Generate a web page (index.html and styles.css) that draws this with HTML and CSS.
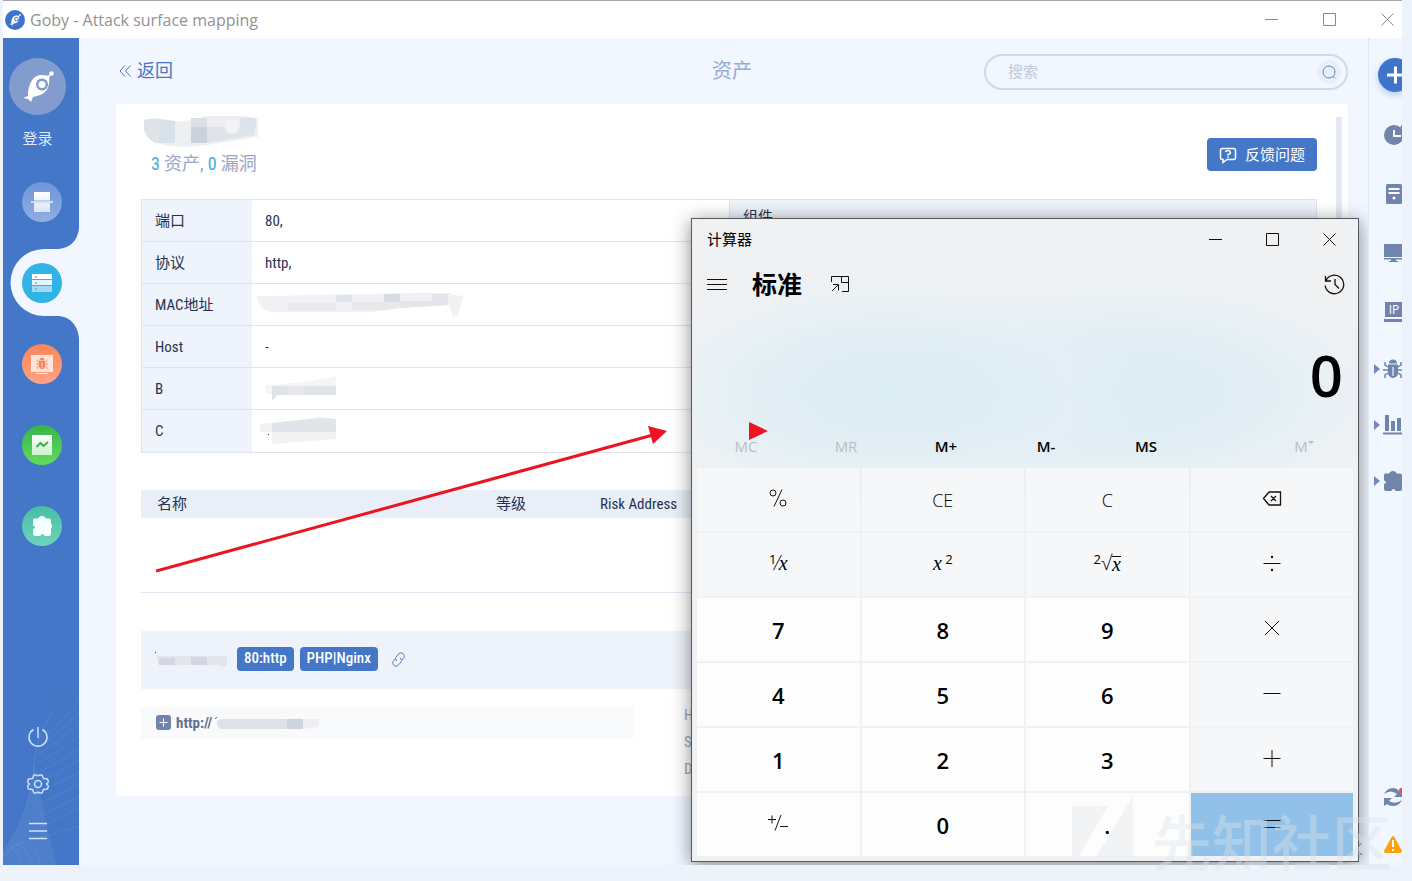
FILE: index.html
```html
<!DOCTYPE html>
<html lang="zh-CN">
<head>
<meta charset="utf-8">
<meta name="viewport" content="width=device-width, initial-scale=1">
<title>Goby - Attack surface mapping</title>
<link rel="stylesheet" href="styles.css">
</head>
<body>
<svg class="defs" aria-hidden="true">
  <defs>
    <linearGradient id="fade" x1="0" y1="0" x2="0" y2="1"><stop offset="0" stop-color="#fff"/><stop offset="1" stop-color="#fff" stop-opacity=".7"/></linearGradient>
    <symbol id="rocket" viewBox="0 0 32 32">
      <path fill="currentColor" fill-rule="evenodd" d="M1 27l5-2C6 17 8 10 13 6c4-3 9-2 14-1 1 6 0 12-4 16-3 3-8 4-12 5l-2 5-3-3zM20 7.500a6 6 0 1 0 .01 0z"/>
      <circle cx="20" cy="13.500" r="3.500" fill="currentColor"/>
      <path d="M24 9l5-6" stroke="currentColor" stroke-width="1.500"/><circle cx="29.500" cy="2.500" r="2.300" fill="currentColor"/>
    </symbol>
    <symbol id="puzzle" viewBox="0 0 20 20">
      <path fill="currentColor" d="M2 2.500h4.500C6.500 1 8 0 10 0s3.500 1 3.500 2.500H17q2 0 2 2V8c1.500.5 1.500 4 0 4.500V18q0 2-2 2h-4.500c0-2.500-4-2.500-4 0H3q-2 0-2-2v-5c2.500 0 2.500-3.500 0-3.500V4.500q0-2 1-2z"/>
    </symbol>
    <symbol id="bug" viewBox="0 0 20 20">
      <path fill="currentColor" d="M6 4.500a4 4 0 0 1 8 0zM5 5.500h10V14a5 5 0 0 1-10 0z"/>
      <path d="M5 8L2 6V3M15 8l3-2V3M5 11H0M15 11h5M5 14l-3 2v3M15 14l3 2v3" fill="none" stroke="currentColor" stroke-width="1.500"/>
      <path d="M10 8v9" stroke="#eef3fd" stroke-width="1.200"/>
    </symbol>
  </defs>
</svg>

<div class="app">
  <header class="titlebar">
    <svg class="titlebar-logo" viewBox="0 0 20 20"><circle cx="10" cy="10" r="10" fill="#3d73cf"/><svg x="4" y="4" width="12" height="12" color="#fff"><use href="#rocket"/></svg></svg>
    <h1>Goby - Attack surface mapping</h1>
    <div class="window-controls">
      <button aria-label="Minimize"><svg viewBox="0 0 13 13"><path d="M0 6.500h13"/></svg></button>
      <button aria-label="Maximize"><svg viewBox="0 0 13 13"><path d="M.5.5h12v12H.5z"/></svg></button>
      <button aria-label="Close"><svg viewBox="0 0 13 13"><path d="M.5.5l12 12M12.500.5l-12 12"/></svg></button>
    </div>
  </header>

  <div class="workspace">
    <nav class="sidebar">
      <svg class="sidebar-waves" viewBox="0 0 76 185" preserveAspectRatio="none">
        <path d="M0 172Q28 135 31 80Q42 145 54 185H0z" fill="#fff" stroke="none" opacity=".06"/>
        <path d="M0 172Q28 135 31 80Q38 30 76 10"/>
        <path d="M34 60Q56 48 76 20M33 68Q56 54 76 32M33 76Q56 62 76 44M33 84Q56 72 76 56M34 94Q56 82 76 68M34 102Q56 94 76 80M34 112Q56 104 76 92M34 124Q56 116 76 104M34 136Q56 128 76 116M34 148Q56 138 76 128M36 158Q56 152 76 146M0 176Q14 158 18 185M4 172Q22 154 28 185M8 168Q30 150 38 185"/>
      </svg>
      <svg class="sidebar-notch" viewBox="0 0 76 122"><path d="M76 0C76 18 67 27 53 27H40.500a33.500 33.500 0 0 0 0 67H53C67 94 76 104 76 122z" fill="#f1f6ff"/></svg>
      <button class="profile"><span class="avatar"><svg width="32" height="32"><use href="#rocket"/></svg></span>登录</button>
      <div class="nav-list">
        <button class="nav-item scan" aria-label="扫描"><svg viewBox="0 0 24 24"><path fill="url(#fade)" d="M4 2h16v8.500H4zM4 13h16v9H4z"/><path d="M1 12h22" stroke="#e8f0ff" stroke-width="1.500"/></svg></button>
        <button class="nav-item asset" aria-label="资产"><svg viewBox="0 0 24 24"><path fill="#fff" d="M2 3h20v5H2z"/><path fill="#e2f4fc" d="M2 9h20v5H2z"/><path fill="#a3daf3" d="M2 15h20v6H2z"/><path d="M5 6h1.500M5 12h1.500M5 18h1.500" stroke="#4aa3cf" stroke-width="1.500"/></svg></button>
        <button class="nav-item vuln" aria-label="漏洞"><svg viewBox="0 0 24 24"><path fill="#ffe4da" d="M1 3h22v17H1zM6 21h12v1H6z"/><svg x="6" y="5" width="12" height="13" color="#f5855a"><use href="#bug"/></svg></svg></button>
        <button class="nav-item report" aria-label="报告"><svg viewBox="0 0 24 24"><path fill="url(#fade)" d="M2 2h20v20H2z"/><path d="M6.500 14l4-4 3 3 4.500-4" fill="none" stroke="#3fae4b" stroke-width="2"/></svg></button>
        <button class="nav-item plugin" aria-label="扩展"><svg viewBox="-2 -2 24 24" color="#f3fffb"><use href="#puzzle" width="20" height="20"/></svg></button>
      </div>
      <div class="nav-tools">
        <button aria-label="电源"><svg viewBox="0 0 22 22"><path d="M6.500 3.500a9 9 0 1 0 9 0M11 1v11"/></svg></button>
        <button aria-label="设置"><svg viewBox="0 0 22 22"><path d="M7 2h2.500q1.500 1.500 3 0H15l1.500 3.500 4 .5 1 3-2 2 2 2-1 3-4 .5L15 20h-2.500q-1.500-1.500-3 0H7l-1.500-3.500-4-.5-1-3 2-2-2-2 1-3 4-.5z" stroke-linejoin="round"/><circle cx="11" cy="11" r="3.500"/></svg></button>
        <button aria-label="菜单"><svg viewBox="0 0 22 22"><path d="M2 3.500h18M2 11h18M2 18.500h18"/></svg></button>
      </div>
    </nav>

    <main class="main">
      <div class="topbar">
        <a class="back" href="#"><svg viewBox="0 0 12 12"><path d="M6 .5L1 6l5 5.500M11.500.5l-5 5.500 5 5.500"/></svg>返回</a>
        <h2>资产</h2>
        <form class="search">
          <input type="text" placeholder="搜索" aria-label="搜索">
          <button type="button" aria-label="搜索"><svg viewBox="0 0 14 14"><circle cx="7" cy="7" r="6"/><path d="M10.500 11l2.500 2.500"/></svg></button>
        </form>
      </div>

      <section class="card">
        <div class="summary">
          <div>
            <svg class="mosaic" width="115" height="32" viewBox="0 0 115 32"><path fill="#edeff3" d="M1 5Q10 0 24 4T60 1t55 2v18L70 28Q35 34 14 27Q1 20 1 5z"/><path fill="#dfe2e8" d="M1 4Q8 2 16 3v24h-4Q3 22 1 14z"/><path fill="#d8e0e9" d="M16 3l16 2v22H16z"/><path fill="#dcdfe6" d="M48 2h16v10H48z"/><path fill="#cdd1dc" d="M48 11h16v16H48z"/><path fill="#dfe4eb" d="M64 11h48v8l-48 8z"/><path fill="#dde1ea" d="M97 2h16v10H97z"/><circle cx="89" cy="11" r="7" fill="#f1f3f5"/></svg>
            <p class="counts"><b>3</b> 资产, <b>0</b> 漏洞</p>
          </div>
          <button class="feedback"><svg viewBox="0 0 18 18"><path d="M3.500 2.500h11q2 0 2 2v7q0 2-2 2H8l-4 3v-3h-.5q-2 0-2-2v-7q0-2 2-2z"/><path d="M6.500 6Q7 4.500 9 4.500T11.500 6.500Q11.500 8 9 8.500v1.200M9 10.500v1.500"/></svg>反馈问题</button>
        </div>

        <div class="details">
          <table class="facts">
            <tr><th scope="row">端口</th><td>80,</td></tr>
            <tr><th scope="row">协议</th><td>http,</td></tr>
            <tr><th scope="row">MAC地址</th><td class="masked"><svg class="mosaic" width="208" height="25" viewBox="0 0 208 25"><path fill="#f0f1f4" d="M0 4L15 4 100 2l60-1h33l3 2 10 1-5 19-5 2-4-12-50 3-27 4H15Q2 18 0 4z"/><path fill="#e8e9ed" d="M31 11h48v8H31zM95 10h48v6l-16 2H95z"/><path fill="#dfe4ea" d="M79 3h16v7H79z"/><path fill="#d9dce4" d="M127 2h16v8h-16z"/><path fill="#e4e5ea" d="M143 9h48v4l-48 3zM175 2h16v8h-16z"/></svg></td></tr>
            <tr><th scope="row">Host</th><td>-</td></tr>
            <tr><th scope="row">B</th><td class="masked"><svg class="mosaic" width="80" height="26" viewBox="0 0 80 26"><path fill="#f5f5f7" d="M9 9L50 6 79 0v18H9z"/><path fill="#dfe2e7" d="M15 10h64v9H20l-5 6z"/><path fill="#e7e8eb" d="M31 10h16v9H31z"/></svg></td></tr>
            <tr><th scope="row">C</th><td class="masked"><svg class="mosaic" width="80" height="28" viewBox="0 0 80 28"><path fill="#f1f2f4" d="M3 7l12-1L64 0l15 2v20l-64 5V15H3z"/><path fill="#e1e4e8" d="M15 6l49-5 15 1v13H15z"/><path fill="#334" d="M11 17h1v1h-1z"/></svg></td></tr>
          </table>
          <div class="components">组件</div>
        </div>

        <table class="risks">
          <thead><tr><th scope="col">名称</th><th scope="col">等级</th><th scope="col">Risk Address</th></tr></thead>
          <tbody><tr><td colspan="3"></td></tr></tbody>
        </table>

        <div class="service">
          <svg class="mosaic" width="73" height="16" viewBox="0 0 73 16"><path fill="#e3e5ec" d="M2 4h70v9l-3 2-5-2H4z"/><path fill="#d3d7e1" d="M4 6h16v7H4zM36 5h16v8H36z"/><path fill="#334" d="M0 0h1v1H0z"/></svg>
          <span class="chip">80:http</span><span class="chip">PHP|Nginx</span>
          <a href="#" aria-label="链接"><svg viewBox="0 0 15 15"><path d="M6 9L5 8q-1-1.500 0-3l3-3.500q2-1.500 4 0t1 4L11 8M9 6l1 1q1 1.500 0 3l-3 3.500q-2 1.500-4 0t-1-4L4 7"/></svg></a>
        </div>

        <div class="responses">
          <div class="url"><svg viewBox="0 0 15 15"><rect width="15" height="15" rx="3" fill="#7184ab"/><path d="M3.500 7.500h8M7.500 3.500v8" stroke="#fff"/></svg><b>http://</b><svg class="mosaic url-mask" width="106" height="14" viewBox="0 0 106 14"><path fill="#dfe1e9" d="M3 5Q6 3 10 3h79v10H8Q2 12 3 5z"/><path fill="#cdd2df" d="M73 3h16v10H73z"/><path fill="#eeeff4" d="M89 3h16v8l-16 2z"/><path d="M1 3l2-2" stroke="#61718f"/></svg></div>
          <ul><li>H</li><li>S</li><li>D</li></ul>
        </div>
        <span class="scroll-thumb"></span>
      </section>
      <svg class="collapse" viewBox="0 0 12 16"><path d="M1 1v14M10 2L4 8l6 6"/></svg>
    </main>

    <aside class="rail">
      <button class="add" aria-label="新增"><svg viewBox="0 0 34 34"><circle cx="17" cy="17" r="17" fill="#3e74ca"/><path d="M9 17h17M17.500 8.500v17" stroke="#fff" stroke-width="3"/></svg></button>
      <div class="rail-group">
        <button aria-label="历史"><svg viewBox="0 0 20 20"><circle cx="11" cy="10" r="10" fill="currentColor"/><path d="M11 5v6h7" fill="none" stroke="#fff" stroke-width="2"/><path fill="#f34b5b" d="M17 3l2-4h2v5z"/></svg></button>
        <button aria-label="服务器"><svg viewBox="0 0 20 20"><rect x="3" width="16" height="20" rx="1.500" fill="currentColor"/><path d="M5.500 5h11M5.500 9h11" stroke="#fff" stroke-width="2"/><circle cx="11" cy="14" r="1.500" fill="#fff"/></svg></button>
        <button aria-label="设备"><svg viewBox="0 0 20 20"><path fill="currentColor" d="M1 1h18v13H1zM1 15h18v1.500h-6V18h2v1H6v-1h2v-1.500H1z"/></svg></button>
        <button aria-label="IP"><svg viewBox="0 0 20 20"><path fill="currentColor" d="M2 0h17v15H2zM1 17h18v3H1z"/><text class="ip" x="11" y="12">IP</text></svg></button>
      </div>
      <div class="rail-group nested">
        <button aria-label="漏洞"><svg viewBox="0 0 20 20"><use href="#bug"/></svg></button>
        <button aria-label="统计"><svg viewBox="0 0 20 20"><path fill="currentColor" d="M2 0h4v16H2zM8 6h4v10H8zM14 3h4v13h-4zM0 17.500h20v2H0z"/></svg></button>
        <button aria-label="扩展"><svg viewBox="0 0 20 20"><use href="#puzzle"/></svg></button>
      </div>
      <div class="rail-group end">
        <button aria-label="更新"><svg viewBox="0 0 20 20"><path fill="currentColor" d="M1 7Q4 1 10 1q4 0 6 3l3-2v8h-8l3-3q-6-5-13 0zM19 13q-3 6-9 6-4 0-6-2l-3 2v-8h8l-3 3q6 4 13-1z"/><path fill="#f34b5b" d="M16 2l4-2v8l-3-2z"/></svg></button>
        <button aria-label="警告"><svg viewBox="0 0 20 20"><path fill="#ff9f0a" d="M10 1q1 0 2 2l7 13q0 2-2 2H3q-2 0-2-2L8 3q1-2 2-2z"/><path d="M10 5v7M10 14v2" stroke="#fff" stroke-width="2"/></svg></button>
      </div>
    </aside>
  </div>

  <section class="calc" aria-label="计算器">
    <header class="calc-title"><span>计算器</span>
      <div class="window-controls">
        <button aria-label="最小化"><svg viewBox="0 0 13 13"><path d="M0 6.500h13"/></svg></button>
        <button aria-label="最大化"><svg viewBox="0 0 13 13"><path d="M.5.5h12v12H.5z"/></svg></button>
        <button aria-label="关闭"><svg viewBox="0 0 13 13"><path d="M.5.5l12 12M12.500.5l-12 12"/></svg></button>
      </div>
    </header>
    <div class="calc-mode">
      <button aria-label="导航"><svg viewBox="0 0 20 20"><path d="M0 5.500h20M0 10.500h20M0 15.500h20"/></svg></button>
      <h3>标准</h3>
      <button aria-label="置顶"><svg viewBox="0 0 20 20"><path d="M1.500 8V2.500h17v15H12M11.500 2.500v6h7M2 17l6-6M3 10.500h5.500v6"/></svg></button>
      <button class="history" aria-label="历史记录"><svg viewBox="0 0 22 22"><path d="M3 7.500a9.300 9.300 0 1 1-.8 5M2.500 3v5H8M12 6v5.500l4 4"/></svg></button>
    </div>
    <output>0</output>
    <div class="memory">
      <button disabled>MC</button><button disabled>MR</button><button>M+</button><button>M-</button><button>MS</button><button disabled>M<svg viewBox="0 0 6 4"><path d="M0 0h6L3 3z" fill="currentColor"/></svg></button>
    </div>
    <div class="keys">
      <button aria-label="百分号"><svg viewBox="0 0 20 20"><circle class="ring" cx="5" cy="5" r="3"/><circle class="ring" cx="15" cy="15" r="3"/><path d="M14 1.500L6 18.500"/></svg></button><button class="letter">CE</button><button class="letter">C</button>
      <button aria-label="退格"><svg viewBox="0 0 20 20"><path d="M7 4h11.500v13H7L1.500 10.500zM9 8l5 5M14 8l-5 5" stroke-width="1.300"/></svg></button>
      <button class="formula"><sup>1</sup>⁄<i>x</i></button><button class="formula"><i>x</i><sup> 2</sup></button><button class="formula"><sup>2</sup>√<i class="root">x</i></button>
      <button aria-label="除"><svg viewBox="0 0 20 20"><path d="M1.500 10.500h17"/><circle cx="10" cy="4" r="1.200"/><circle cx="10" cy="17" r="1.200"/></svg></button>
      <button class="digit">7</button><button class="digit">8</button><button class="digit">9</button>
      <button aria-label="乘"><svg viewBox="0 0 20 20"><path d="M3 3l14 14M17 3L3 17"/></svg></button>
      <button class="digit">4</button><button class="digit">5</button><button class="digit">6</button>
      <button aria-label="减"><svg viewBox="0 0 20 20"><path d="M1.500 10.500h17"/></svg></button>
      <button class="digit">1</button><button class="digit">2</button><button class="digit">3</button>
      <button aria-label="加"><svg viewBox="0 0 20 20"><path d="M1.500 10.500h17M10 2v17"/></svg></button>
      <button class="digit" aria-label="正负"><svg class="sign" viewBox="0 0 22 20"><path d="M1 6.500h8M5 2.500v8M14 2L8 17.500M13 13.500h8"/></svg></button><button class="digit">0</button><button class="digit">.</button>
      <button class="equals" aria-label="等于"><svg viewBox="0 0 20 20"><path d="M1.500 7.500h17M1.500 14.500h17"/></svg></button>
    </div>
  </section>
</div>

<svg class="annotation" width="612" height="152" viewBox="0 0 612 152"><path d="M0 150L497 14" stroke="#ea1520" stroke-width="3"/><path d="M511 10l-19-5 5 18zM593 1v18l19-9z" fill="#ea1520"/></svg>
<div class="watermark"><svg viewBox="0 0 61 61"><path d="M0 0h36L7 50H0zM61-10v61H24z"/></svg><span>先知社区</span></div>
</body>
</html>
```
FILE: styles.css
```css
* { box-sizing: border-box; }
body {
  margin: 0;
  background: #edf2fb;
  color: #263252;
  font: 15px/20px "Roboto Condensed", Roboto, "Noto Sans CJK SC", sans-serif;
}
h1, h2, h3, p, ul { margin: 0; padding: 0; list-style: none; font-weight: 400; }
button { padding: 0; border: 0; background: none; color: inherit; font: inherit; }
a { color: inherit; text-decoration: none; }
svg { display: block; fill: none; }
.defs { position: absolute; width: 0; height: 0; }
.mosaic { flex: none; }

.app {
  position: relative;
  display: flex;
  flex-direction: column;
  height: calc(100vh - 16px);
  min-height: 865px;
  margin: 0 10px 0 3px;
  overflow: hidden;
  border-top: 1px solid #a7a7a9;
  background: #f1f6ff;
}
.titlebar { display: flex; align-items: center; height: 37px; padding-left: 2px; background: #fff; }
.titlebar-logo { width: 20px; height: 20px; margin-right: 5px; }
.titlebar h1 { color: #929292; font: 16px/20px "Open Sans", sans-serif; }
.window-controls { display: flex; margin-left: auto; }
.window-controls button { display: grid; place-items: center; width: 58px; height: 36px; }
.window-controls svg { width: 13px; height: 13px; stroke: #888; }
.titlebar .window-controls { margin-right: -14px; }

.workspace { display: flex; flex: 1; min-height: 0; }
.sidebar {
  position: relative;
  display: flex;
  flex: none;
  flex-direction: column;
  width: 76px;
  padding: 20px 0 23px;
  background: #4477c8;
}
.sidebar-waves { position: absolute; bottom: 0; left: 0; width: 76px; height: 185px; stroke: #fff; stroke-opacity: .07; }
.sidebar-notch { position: absolute; top: 184px; left: 0; width: 77px; height: 122px; }
.profile { position: relative; width: 69px; color: #dfe9fb; }
.avatar { display: grid; place-items: center; width: 57px; height: 57px; margin: 0 auto 14px; border-radius: 50%; background: #829ccd; color: #fff; }
.nav-list { position: relative; display: flex; flex-direction: column; gap: 41px; margin: 33px 0 0 19px; }
.nav-item { display: grid; place-items: center; width: 40px; height: 40px; border-radius: 50%; }
.nav-item svg { width: 24px; height: 24px; }
.nav-item svg svg { width: 12px; height: 13px; }
.scan { background: linear-gradient(#6d95d9, #90aee2); }
.asset { background: #31b3e6; }
.vuln { background: linear-gradient(#fa8558, #ffa486); }
.report { background: linear-gradient(#35b64a, #63dc5a); }
.plugin { background: linear-gradient(#49bda5, #6dd4bb); }
.nav-tools { position: relative; display: flex; flex-direction: column; gap: 25px; width: 69px; margin-top: auto; }
.nav-tools svg { width: 22px; height: 22px; margin: auto; stroke: #cfe0fb; stroke-width: 1.500; }

.main { position: relative; flex: 1; min-width: 0; padding: 0 20px 0 37px; }
.topbar { display: grid; grid-template-columns: 1fr auto 1fr; align-items: center; height: 66px; }
.back { display: flex; align-items: center; gap: 6px; padding-left: 3px; color: #4c75c3; font-size: 18px; }
.back svg { width: 12px; height: 12px; stroke: #5076c0; }
.topbar h2 { color: #98aad1; font-size: 20px; }
.search { display: flex; align-items: center; justify-self: end; width: 364px; height: 36px; margin-top: 2px; padding: 0 5px 0 20px; border: 2px solid #d0d7e8; border-radius: 18px; }
.search input { flex: 1; min-width: 0; border: 0; outline: 0; background: none; font: inherit; }
.search input::placeholder { color: #c1c9da; }
.search button { display: grid; place-items: center; width: 24px; height: 24px; border-radius: 50%; background: #e8effa; }
.search svg { width: 14px; height: 14px; stroke: #6384b9; }

.card { position: relative; height: 692px; padding: 12px 31px 0 25px; background: #fff; }
.scroll-thumb { position: absolute; top: 13px; right: 6px; width: 6px; height: 420px; background: #e5e9f5; }
.summary { display: flex; align-items: center; justify-content: space-between; height: 83px; padding-left: 2px; }
.summary > div { margin-top: -20px; }
.counts { padding: 6px 8px; color: #98a6c7; font-size: 18px; }
.counts b { color: #43acd9; font-weight: 400; }
.feedback { display: flex; align-items: center; gap: 8px; height: 33px; margin-top: -6px; padding: 0 12px; border-radius: 4px; background: #4477c8; color: #fff; }
.feedback svg { width: 18px; height: 18px; stroke: #fff; stroke-width: 1.500; }

.details { display: grid; grid-template-columns: 1fr 1fr; border: 1px solid #dfe4f0; }
.facts { width: 100%; border-spacing: 0; table-layout: fixed; }
.facts th, .facts td { height: 42px; padding: 0 13px; border-bottom: 1px solid #dfe4f0; }
.facts tr:last-child > * { border-bottom: 0; }
.facts th { width: 110px; background: #eff3fb; font-weight: 400; text-align: left; }
.facts .masked { padding: 0 5px; }
.components { padding: 7px 13px; border-left: 1px solid #dfe4f0; background: #eff3fb; }
.risks { width: 100%; margin-top: 37px; border-collapse: collapse; border-bottom: 1px solid #dfe4f0; table-layout: fixed; }
.risks th { height: 28px; padding: 0 0 0 16px; background: #e9eef8; font-weight: 400; text-align: left; }
.risks th:first-child { width: 339px; }
.risks th:nth-child(2) { width: 104px; }
.risks td { height: 74px; }
.service { display: flex; align-items: center; gap: 6px; height: 58px; margin-top: 38px; padding-left: 14px; background: #eef2fa; }
.service .mosaic { margin-right: 3px; }
.chip { height: 24px; margin-bottom: 2px; padding: 0 7px; border-radius: 4px; background: #4477c8; color: #fff; font-weight: 500; line-height: 23px; }
.service a { margin-left: 7px; }
.service a svg { width: 15px; height: 15px; stroke: #5f7eb7; }
.responses { display: flex; gap: 50px; margin-top: 18px; }
.url { display: flex; align-items: center; width: 493px; height: 32px; padding-left: 15px; background: #f9fafb; color: #61718f; }
.url > svg:first-child { width: 15px; height: 15px; margin-right: 5px; }
.url-mask { margin-left: 2px; }
.responses li { height: 27px; color: #9ba7c3; line-height: 16px; }
.collapse { position: absolute; right: 4px; bottom: 8px; width: 12px; height: 16px; stroke: #6c7482; }

.rail { position: relative; z-index: 2; display: flex; flex: none; flex-direction: column; align-items: flex-end; width: 34px; padding: 20px 0 10px; overflow: hidden; border-left: 1px solid #e0e7f4; background: #f1f6ffe8; color: #7184ab; }
.rail svg { width: 20px; height: 20px; }
.add { margin-right: -10px; border-radius: 50%; box-shadow: 0 3px 7px #4477c855; }
.rail .add svg { width: 34px; height: 34px; }
.rail-group { display: flex; flex-direction: column; gap: 39px; margin: 33px -1px 0 0; }
.rail-group.nested { gap: 36px; margin-top: 37px; }
.nested button { display: flex; align-items: center; gap: 3px; }
.nested button::before { content: ""; border: solid transparent; border-width: 5px 0 5px 6px; border-left-color: #6f88bd; }
.rail-group.end { gap: 28px; margin-top: auto; }
.ip { fill: #fff; font: 12px "Open Sans", sans-serif; text-anchor: middle; }

.calc {
  position: absolute;
  top: 217px;
  right: 43px;
  display: flex;
  flex-direction: column;
  width: 668px;
  height: 644px;
  border: 1px solid #55585c;
  background:
    radial-gradient(ellipse 260px 120px at 30% 27%, #dcecf3 0, #dfedf4dd 45%, #e4f0f6aa 70%, #eff1f300 100%),
    radial-gradient(ellipse 270px 120px at 66% 27%, #dcecf3 0, #dfedf4dd 45%, #e4f0f6aa 70%, #eff1f300 100%),
    #eff1f3;
  box-shadow: 0 3px 18px #0007;
  color: #000;
  font-family: "Open Sans", "Noto Sans CJK SC", sans-serif;
}
.calc svg { stroke: #111; }
.calc-title { display: flex; align-items: center; height: 40px; padding-left: 15px; }
.calc-title button { width: 57px; }
.calc-mode { display: flex; align-items: center; height: 50px; padding: 0 13px 0 15px; }
.calc-mode svg { width: 20px; height: 20px; }
.calc-mode h3 { margin: 0 28px 0 25px; font-size: 25px; font-weight: 700; line-height: 30px; }
.calc-mode .history { margin-left: auto; }
.calc-mode .history svg { width: 22px; height: 22px; stroke-width: 1.300; }
.calc output { flex: 1; padding: 26px 15px 0; font-size: 58px; font-weight: 600; line-height: 80px; text-align: right; }
.memory { display: flex; height: 36px; padding: 0 4px; }
.memory button { flex: 0 0 100px; font-size: 15px; font-weight: 600; }
.memory button:disabled { color: #bbbec1; font-weight: 400; }
.memory button:last-child { margin-left: auto; }
.memory svg { display: inline-block; width: 6px; height: 4px; margin-bottom: 7px; stroke: none; }
.keys { display: grid; grid-template-columns: repeat(4, 1fr); grid-auto-rows: 63px; gap: 2px; padding: 4px 5px 5px; }
.keys button { display: grid; place-items: center; padding-bottom: 3px; background: #f6f7f9; font-size: 20px; }
.keys svg { width: 20px; height: 20px; }
.keys circle { fill: #111; stroke: none; }
.keys .ring { fill: none; stroke: #111; }
.keys .digit { padding: 0; background: #fdfdfe; font-size: 22px; font-weight: 600; }
.keys .sign { width: 22px; margin-bottom: 3px; }
.keys .letter { padding: 0; font-size: 18px; font-weight: 300; }
.keys .formula { display: flex; align-items: center; justify-content: center; font-size: 20px; font-weight: 300; }
.formula i { font-family: "Liberation Serif", serif; font-weight: 400; }
.formula sup { margin-bottom: 8px; font-size: 13px; font-weight: 400; line-height: 12px; white-space: pre; }
.formula .root { border-top: 1px solid #111; line-height: 14px; }
.keys .equals { background: #91c1e8; }

.annotation { position: absolute; top: 421px; left: 156px; pointer-events: none; }
.watermark { position: absolute; z-index: 3; right: 20px; bottom: 1px; display: flex; align-items: center; gap: 19px; color: #dce3ea66; font: 500 60px/80px "Noto Sans CJK SC", sans-serif; pointer-events: none; }
.watermark svg { width: 61px; height: 61px; margin-bottom: 8px; overflow: visible; fill: #dfe2e555; }
```
